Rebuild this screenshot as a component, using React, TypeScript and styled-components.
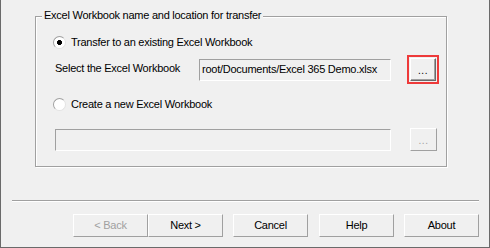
import styled, {createGlobalStyle} from 'styled-components';

const GlobalStyle = createGlobalStyle`
  html, body {
    margin: 0;
    padding: 0;
    background: #f0f0f0;
  }
  body {
    font-family: "Liberation Sans", Arial, sans-serif;
    font-size: 11px;
    letter-spacing: -0.25px;
    color: #000;
  }
  * {
    box-sizing: border-box;
  }
`;

const Window = styled.div`
  width: 490px;
  height: 248px;
  display: flex;
  flex-direction: column;
  padding-top: 16px;
  background: #f0f0f0;
  border-left: 1px solid #6a6a6a;
  border-right: 1px solid #6a6a6a;
  border-bottom: 1px solid #6a6a6a;
  overflow: hidden;
`;

const GroupBox = styled.div`
  position: relative;
  margin-left: 34px;
  width: 412px;
  height: 151px;
  border: 1px solid #a0a0a0;
  box-shadow: inset 1px 1px 0 #fff, 1px 1px 0 #fff;
  display: flex;
  flex-direction: column;
`;

const Legend = styled.span`
  position: absolute;
  left: 6px;
  top: -8px;
  padding: 0 2px;
  line-height: 13px;
  background: #f0f0f0;
  white-space: nowrap;
`;

const RadioRow = styled.label<{top: number}>`
  display: flex;
  align-items: center;
  gap: 5px;
  height: 14px;
  margin-top: ${p => p.top}px;
  padding-left: 17px;
  line-height: 13px;
  white-space: nowrap;
`;

const Radio = styled.span<{checked?: boolean}>`
  width: 13px;
  height: 13px;
  border-radius: 50%;
  border: 1px solid;
  border-color: #a0a0a0 #e3e3e3 #e3e3e3 #a0a0a0;
  background: ${p =>
    p.checked
      ? 'radial-gradient(circle, #000 0 2.2px, #fff 2.8px)'
      : '#fff'};
  flex: none;
`;

const FieldRow = styled.div<{top: number; indent: number}>`
  display: flex;
  align-items: center;
  margin-top: ${p => p.top}px;
  padding-left: ${p => p.indent}px;
`;

const FieldLabel = styled.span`
  width: 144px;
  line-height: 13px;
  margin-bottom: 3px;
  white-space: nowrap;
`;

const TextBox = styled.div<{width: number}>`
  width: ${p => p.width}px;
  height: 22px;
  padding: 3px 0 0 2px;
  border: 1px solid;
  border-color: #a0a0a0 #fff #fff #a0a0a0;
  background: #f0f0f0;
  line-height: 13px;
  white-space: nowrap;
  overflow: hidden;
`;

const FocusRing = styled.div`
  margin-left: 16px;
  padding: 1px;
  border: 2px solid #ee3a3a;
  display: flex;
`;

const BrowseButton = styled.div<{disabled?: boolean; primary?: boolean}>`
  width: ${p => (p.primary ? 26 : 27)}px;
  height: 23px;
  margin-left: ${p => (p.primary ? 0 : 19)}px;
  border: 1px solid;
  border-color: #fff ${p => (p.primary ? '#696969' : '#a0a0a0')}
    ${p => (p.primary ? '#696969' : '#a0a0a0')} #fff;
  box-shadow: ${p => (p.primary ? 'inset -1px -1px 0 #a0a0a0' : 'none')};
  background: #f0f0f0;
  display: flex;
  align-items: center;
  justify-content: center;
  padding-top: 2px;
  color: ${p => (p.disabled ? '#a0a0a0' : '#000')};
  font-size: 10px;
  letter-spacing: 0.5px;
`;

const Separator = styled.div`
  margin: 33px 0 0 11px;
  width: 467px;
  height: 2px;
  border-top: 1px solid #a0a0a0;
  border-bottom: 1px solid #fff;
`;

const ButtonBar = styled.div`
  display: flex;
  margin-top: 12px;
  padding-left: 72px;
`;

const DialogButton = styled.div<{disabled?: boolean; gap?: number}>`
  width: 75px;
  height: 23px;
  margin-left: ${p => p.gap ?? 0}px;
  border: 1px solid;
  border-color: #fff #a0a0a0 #a0a0a0 #fff;
  display: flex;
  align-items: center;
  justify-content: center;
  color: ${p => (p.disabled ? '#a0a0a0' : '#000')};
  line-height: 13px;
`;

export default function App() {
  return (
    <>
      <GlobalStyle />
      <Window>
        <GroupBox>
          <Legend>Excel Workbook name and location for transfer</Legend>

          <RadioRow top={18}>
            <Radio checked />
            Transfer to an existing Excel Workbook
          </RadioRow>

          <FieldRow top={6} indent={19}>
            <FieldLabel>Select the Excel Workbook</FieldLabel>
            <TextBox width={192}>root/Documents/Excel 365 Demo.xlsx</TextBox>
            <FocusRing>
              <BrowseButton primary>...</BrowseButton>
            </FocusRing>
          </FieldRow>

          <RadioRow top={13}>
            <Radio />
            Create a new Excel Workbook
          </RadioRow>

          <FieldRow top={17} indent={19}>
            <TextBox width={336} />
            <BrowseButton disabled>...</BrowseButton>
          </FieldRow>
        </GroupBox>

        <Separator />

        <ButtonBar>
          <DialogButton disabled>&lt; Back</DialogButton>
          <DialogButton>Next &gt;</DialogButton>
          <DialogButton gap={10}>Cancel</DialogButton>
          <DialogButton gap={11}>Help</DialogButton>
          <DialogButton gap={10}>About</DialogButton>
        </ButtonBar>
      </Window>
    </>
  );
}
